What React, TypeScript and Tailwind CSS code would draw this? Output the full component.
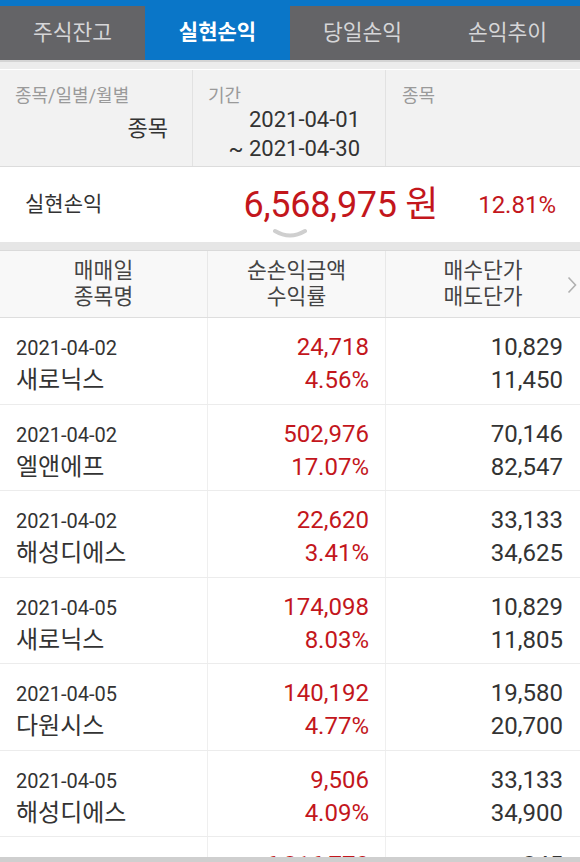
import React from "react";

const font = { fontFamily: "Roboto, 'Noto Sans CJK KR', 'Noto Sans', sans-serif" };

const rows = [
  { d: "2021-04-02", n: "새로닉스", a: "24,718", r: "4.56%", b: "10,829", s: "11,450" },
  { d: "2021-04-02", n: "엘앤에프", a: "502,976", r: "17.07%", b: "70,146", s: "82,547" },
  { d: "2021-04-02", n: "해성디에스", a: "22,620", r: "3.41%", b: "33,133", s: "34,625" },
  { d: "2021-04-05", n: "새로닉스", a: "174,098", r: "8.03%", b: "10,829", s: "11,805" },
  { d: "2021-04-05", n: "다원시스", a: "140,192", r: "4.77%", b: "19,580", s: "20,700" },
  { d: "2021-04-05", n: "해성디에스", a: "9,506", r: "4.09%", b: "33,133", s: "34,900" },
];

export default function App() {
  const tabs = ["주식잔고", "실현손익", "당일손익", "손익추이"];
  return (
    <div className="w-[580px] h-[862px] overflow-hidden bg-white flex flex-col text-[#333]" style={font}>
      <div className="h-[6px] bg-[#0a76c8] shrink-0" />
      <div className="h-[54px] flex bg-[#646467] shrink-0">
        {tabs.map((t, i) => (
          <div
            key={t}
            className={
              i === 1
                ? "flex-1 flex items-center justify-center bg-[#0a76c8] text-white text-[21px] font-bold"
                : "flex-1 flex items-center justify-center text-[#d6d6d8] text-[21.5px]"
            }
          >
            {t}
          </div>
        ))}
      </div>
      <div className="h-[10px] shrink-0 bg-[#ececec] border-t-2 border-[#d4d4d4] border-b border-b-white" />
      <div className="h-[97px] shrink-0 grid grid-cols-[193px_193px_1fr] bg-[#f2f2f2] border-b border-[#dcdcdc]">
        <div className="border-r border-[#e2e2e2] flex flex-col pt-[14px] pl-[15px] pr-[24px]">
          <div className="text-[18px] leading-[24px] text-[#9a9a9a]">종목/일별/월별</div>
          <div className="text-[22px] leading-[30px] text-[#333] text-right mt-[6px]">종목</div>
        </div>
        <div className="border-r border-[#e2e2e2] flex flex-col pt-[14px] pl-[15px] pr-[25px]">
          <div className="text-[18px] leading-[24px] text-[#9a9a9a]">기간</div>
          <div className="text-[22px] leading-[29px] text-[#333] text-right -mt-[3px]">2021-04-01</div>
          <div className="text-[22px] leading-[29px] text-[#333] text-right">~ 2021-04-30</div>
        </div>
        <div className="flex flex-col pt-[14px] pl-[16px]">
          <div className="text-[18px] leading-[24px] text-[#9a9a9a]">종목</div>
        </div>
      </div>
      <div className="h-[75px] shrink-0 relative flex items-center bg-white">
        <div className="pl-[25px] text-[21px] text-[#333]">실현손익</div>
        <div className="ml-auto text-[36px] leading-none text-[#c3161c] tracking-[-0.3px]">6,568,975 원</div>
        <div className="ml-[40px] mr-[24px] text-[24px] text-[#c3161c]">12.81%</div>
        <svg className="absolute left-[273px] top-[61px]" width="34" height="12" viewBox="0 0 34 12">
          <path d="M2 3 Q17 12 32 3" fill="none" stroke="#cfcfcf" strokeWidth="4" strokeLinecap="round" />
        </svg>
      </div>
      <div className="h-[9px] shrink-0 bg-[#e6e6e6] border-b border-[#dadada]" />
      <div className="h-[67px] shrink-0 grid grid-cols-[208px_178px_1fr] bg-[#f8f8f8] border-b border-[#dedede] relative">
        <div className="border-r border-[#e8e8e8] flex flex-col items-center justify-center text-[21.5px] leading-[26px] text-[#444]">
          <div>매매일</div>
          <div>종목명</div>
        </div>
        <div className="border-r border-[#e8e8e8] flex flex-col items-center justify-center text-[21.5px] leading-[26px] text-[#444]">
          <div>순손익금액</div>
          <div>수익률</div>
        </div>
        <div className="flex flex-col items-center justify-center text-[21.5px] leading-[26px] text-[#444]">
          <div>매수단가</div>
          <div>매도단가</div>
        </div>
        <svg className="absolute right-[3px] top-[25px]" width="10" height="18" viewBox="0 0 10 18">
          <path d="M1.5 1.5 L8.5 9 L1.5 16.5" fill="none" stroke="#b0b0b0" strokeWidth="1.6" />
        </svg>
      </div>
      <div className="flex-1 overflow-hidden">
        {rows.map((r, i) => (
          <div key={i} className="h-[86.5px] grid grid-cols-[208px_178px_1fr] border-b border-[#ececec]">
            <div className="border-r border-[#efefef] pl-[16px] pt-[14px]">
              <div className="text-[20px] leading-[32px] text-[#333]">{r.d}</div>
              <div className="text-[24px] leading-[32px] text-[#333]">{r.n}</div>
            </div>
            <div className="border-r border-[#efefef] pr-[16px] pt-[13px] text-right text-[24px] leading-[33px] text-[#c3161c]">
              <div>{r.a}</div>
              <div>{r.r}</div>
            </div>
            <div className="pr-[17px] pt-[13px] text-right text-[24px] leading-[33px] text-[#333]">
              <div>{r.b}</div>
              <div>{r.s}</div>
            </div>
          </div>
        ))}
        <div className="h-[86.5px] grid grid-cols-[208px_178px_1fr]">
          <div className="border-r border-[#efefef]" />
          <div className="border-r border-[#efefef] pr-[16px] pt-[12px] text-right text-[24px] leading-[33px] text-[#c3161c]">
            <div>6,816,770</div>
          </div>
          <div className="pr-[17px] pt-[12px] text-right text-[24px] leading-[33px] text-[#333]">
            <div>845</div>
          </div>
        </div>
      </div>
      <div className="h-[5px] shrink-0 bg-[#cfcfcf]" />
    </div>
  );
}
